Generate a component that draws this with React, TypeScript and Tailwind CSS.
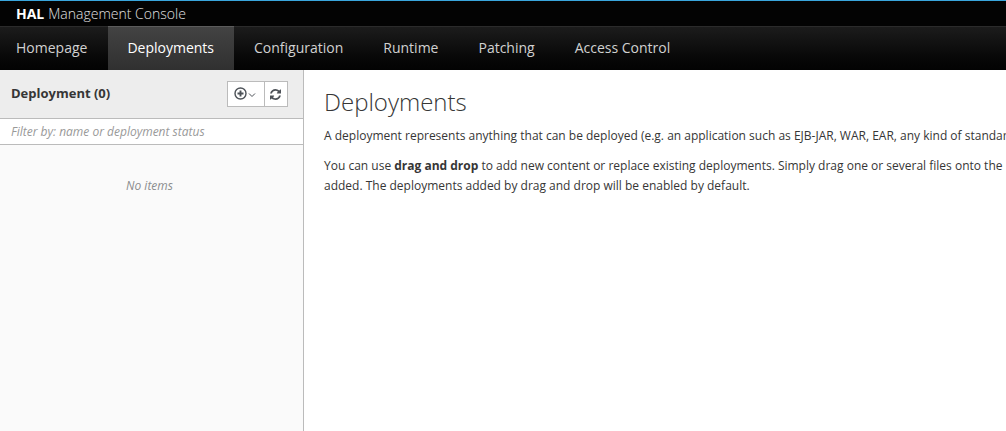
import React from "react";

const navItems = ["Homepage", "Deployments", "Configuration", "Runtime", "Patching", "Access Control"];

function AddIcon() {
  return (
    <svg viewBox="0 0 13 13" className="size-[13px]" fill="none" stroke="currentColor" aria-hidden="true">
      <circle cx="6.5" cy="6.5" r="5.5" strokeWidth="1.4" />
      <path d="M6.500 3.500v6M3.500 6.500h6" strokeWidth="1.9" />
    </svg>
  );
}

function AngleDownIcon() {
  return (
    <svg viewBox="0 0 8 6" className="mt-1 h-1.5 w-2" fill="none" stroke="currentColor" aria-hidden="true">
      <path d="M1 1.500l3 3 3-3" strokeWidth="1" />
    </svg>
  );
}

function RefreshIcon() {
  return (
    <svg viewBox="0 0 1536 1536" className="size-[11px]" fill="currentColor" aria-hidden="true">
      <path d="M1511 928q0 5-1 7-64 268-268 434.500t-478 166.500q-146 0-282.500-55t-243.500-157l-129 129q-19 19-45 19t-45-19-19-45v-448q0-26 19-45t45-19h448q26 0 45 19t19 45-19 45l-137 137q71 66 161 102t187 36q134 0 250-65t186-179q11-17 53-117 8-23 30-23h192q13 0 22.500 9.500t9.500 22.500zm25-800v448q0 26-19 45t-45 19h-448q-26 0-45-19t-19-45 19-45l138-138q-148-137-349-137-134 0-250 65t-186 179q-11 17-53 117-8 23-30 23h-199q-13 0-22.500-9.500t-9.500-22.500v-7q65-268 270-434.500t480-166.500q146 0 284 55.500t245 156.500l130-129q19-19 45-19t45 19 19 45z" />
    </svg>
  );
}

export default function App() {
  return (
    <div className="flex min-h-screen flex-col overflow-hidden bg-white font-['Open_Sans',sans-serif] text-xs leading-5 text-[#363636]">
      <header className="border-t border-[#39a5dc] bg-[#030303]">
        <a href="#home" className="flex h-[25px] items-center gap-1 px-4 text-sm font-light text-[#e0e0e0]">
          <strong className="font-bold text-white">HAL</strong>
          <span>Management Console</span>
        </a>
        <nav className="flex h-11 border-t border-[#2b2b2b] bg-linear-to-b from-[#1c1c1c] to-[#030303] pr-4">
          {navItems.map((item) => {
            const active = item === "Deployments";
            return (
              <a
                key={item}
                href={"#" + item.toLowerCase().replace(" ", "-")}
                aria-current={active ? "page" : undefined}
                className={
                  active
                    ? "-mt-px flex items-center border-t border-[#5c5c5c] bg-linear-to-b from-[#434343] to-[#303030] pr-5 pb-0.5 pl-[19px] text-sm text-white"
                    : "flex items-center px-5 pb-0.5 text-sm text-[#d1d1d1] first:pr-[21px] first:pl-4"
                }
              >
                {item}
              </a>
            );
          })}
        </nav>
      </header>
      <div className="flex grow">
        <aside className="w-76 shrink-0 border-r border-[#bbb] bg-[#fafafa]">
          <div className="flex h-12 items-center justify-between bg-[#ededed] pr-[15px] pl-[11px]">
            <h2 className="pb-0.5 text-[13px] font-bold">Deployment (0)</h2>
            <div className="flex h-[26px] border border-[#bbb] bg-white text-[#4d5258]">
              <button type="button" aria-label="Add deployment" className="flex w-9 items-center gap-px pb-0.5 pl-1.5">
                <AddIcon />
                <AngleDownIcon />
              </button>
              <button type="button" aria-label="Refresh" className="flex w-[23px] items-center border-l border-[#bbb] pl-[5px]">
                <RefreshIcon />
              </button>
            </div>
          </div>
          <input
            type="text"
            aria-label="Filter"
            placeholder="Filter by: name or deployment status"
            className="block h-[27px] w-full border-y border-[#bbb] bg-white px-[11px] text-xs outline-none placeholder:text-[#999] placeholder:italic"
          />
          <p className="pt-[31px] pr-1 text-center text-[#8b8d8f] italic">No items</p>
        </aside>
        <main className="min-w-0 grow overflow-hidden pt-5 pl-5 whitespace-nowrap">
          <h1 className="pb-0.5 text-2xl leading-6 font-light">Deployments</h1>
          <p className="mt-[10px]">
            A deployment represents anything that can be deployed (e.g. an application such as EJB-JAR, WAR, EAR, any kind of standard
          </p>
          <p className="mt-[10px]">
            You can use <strong className="font-bold">drag and drop</strong> to add new content or replace existing deployments. Simply drag one or several files onto the
            <br />
            added. The deployments added by drag and drop will be enabled by default.
          </p>
        </main>
      </div>
    </div>
  );
}
